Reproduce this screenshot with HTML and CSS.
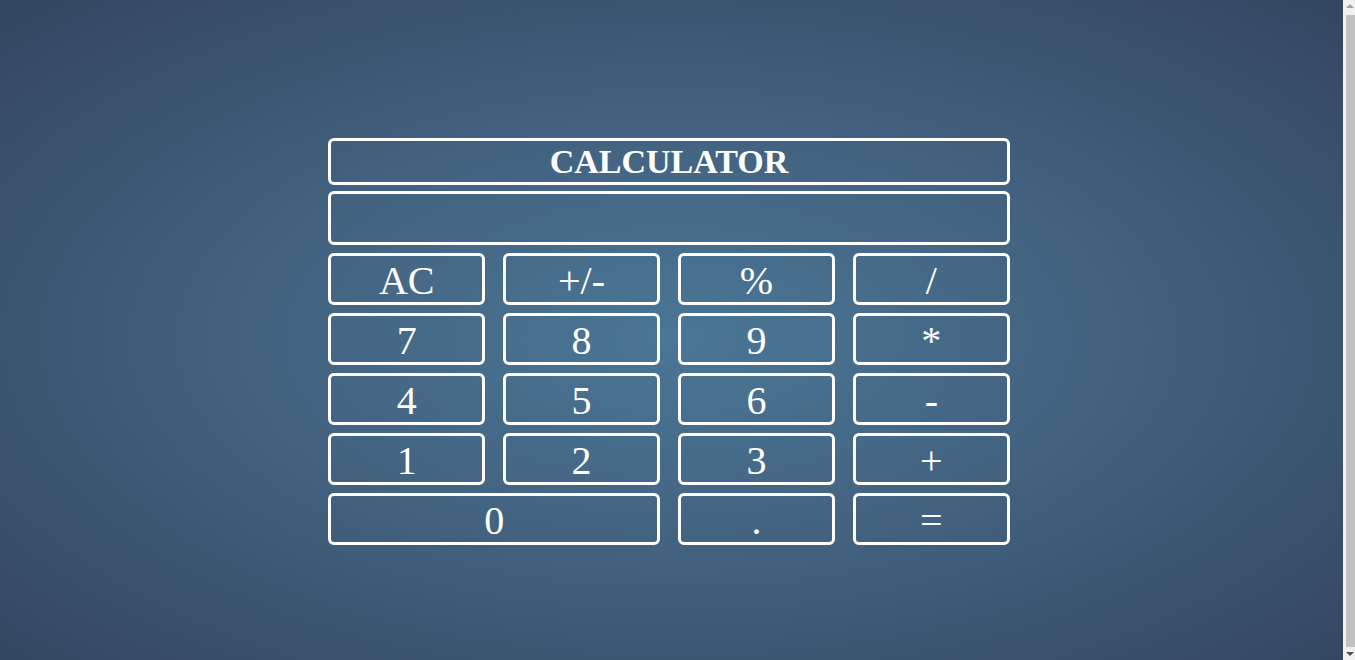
FILE: index.html
```html
<!DOCTYPE html>
<html lang="en">
<head>
<meta charset="utf-8">
<title>Calculator</title>
<link rel="stylesheet" href="styles.css">
</head>
<body>
<main class="calc">
  <div class="title">CALCULATOR</div>
  <div class="display"></div>
  <div class="keys">
    <button class="key">AC</button>
    <button class="key">+/-</button>
    <button class="key">%</button>
    <button class="key">/</button>
    <button class="key">7</button>
    <button class="key">8</button>
    <button class="key">9</button>
    <button class="key">*</button>
    <button class="key">4</button>
    <button class="key">5</button>
    <button class="key">6</button>
    <button class="key">-</button>
    <button class="key">1</button>
    <button class="key">2</button>
    <button class="key">3</button>
    <button class="key">+</button>
    <button class="key key-wide">0</button>
    <button class="key">.</button>
    <button class="key">=</button>
  </div>
</main>
<div class="scrollbar" aria-hidden="true">
  <span class="arrow arrow-up"></span>
  <span class="thumb"></span>
  <span class="arrow arrow-down"></span>
</div>
</body>
</html>
```
FILE: styles.css
```css
html {
  background: radial-gradient(ellipse at 50% 50%, #4b7696 0%, #42627f 45%, #33455f 100%);
}
body {
  margin: 8px 25px 8px 8px;
  height: 100vh;
  display: flex;
  align-items: center;
  justify-content: center;
  font-family: "Liberation Serif", "Times New Roman", serif;
  color: #fff;
}
.calc {
  width: 682px;
  display: flex;
  flex-direction: column;
  margin-top: 7px;
}
.title {
  height: 41px;
  border: 3px solid #fff;
  border-radius: 6px;
  text-align: center;
  font-weight: bold;
  font-size: 34px;
  line-height: 41px;
}
.display {
  margin-top: 6px;
  height: 48px;
  border: 3px solid #fff;
  border-radius: 6px;
}
.keys {
  margin-top: 8px;
  display: grid;
  grid-template-columns: repeat(4, 1fr);
  column-gap: 17.5px;
  row-gap: 8px;
}
.key {
  height: 52px;
  padding: 4px 0 0;
  background: transparent;
  border: 3px solid #fff;
  border-radius: 6px;
  color: #fff;
  font-family: "Liberation Serif", "Times New Roman", serif;
  font-size: 40px;
  line-height: 42px;
}
.key-wide {
  grid-column: span 2;
}
.scrollbar {
  position: fixed;
  top: 0;
  right: 0;
  bottom: 0;
  width: 12px;
  background: #f1f1f1;
  display: flex;
  flex-direction: column;
  align-items: flex-end;
}
.arrow {
  width: 0;
  height: 0;
  margin: 4px 1px 5px 0;
  border-left: 4px solid transparent;
  border-right: 4px solid transparent;
}
.arrow-up {
  border-bottom: 4px solid #a3a3a3;
}
.arrow-down {
  border-top: 4px solid #505050;
  margin: 5px 1px 4px 0;
}
.thumb {
  flex: 1;
  width: 9px;
  margin-top: 2px;
  background: #c1c1c1;
}
```
